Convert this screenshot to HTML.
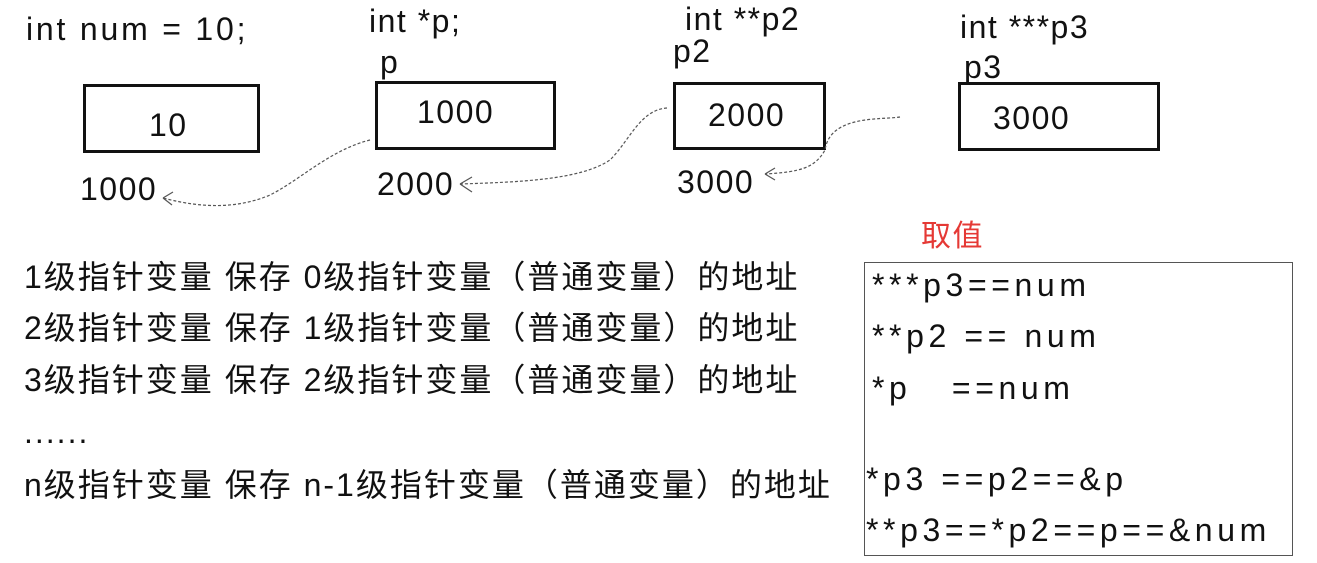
<!DOCTYPE html>
<html><head><meta charset="utf-8"><style>
body{margin:0;width:1317px;height:563px;background:#fff;position:relative;overflow:hidden;font-family:"Liberation Sans","Noto Sans CJK SC",sans-serif;color:#111}
.t{position:absolute;white-space:nowrap;font-size:32px;line-height:1;letter-spacing:1.5px}
.b{position:absolute;border:3px solid #111;box-sizing:border-box}
.c{font-size:32px;letter-spacing:2px}
.r{letter-spacing:4.6px}
</style></head><body>
<div class="t" style="left:26px;top:13px;letter-spacing:2.8px">int num = 10;</div>
<div class="t" style="left:369px;top:5px">int *p;</div>
<div class="t" style="left:380px;top:46px">p</div>
<div class="t" style="left:685px;top:3px">int **p2</div>
<div class="t" style="left:673px;top:35px">p2</div>
<div class="t" style="left:960px;top:11px">int ***p3</div>
<div class="t" style="left:964px;top:51px">p3</div>

<div class="b" style="left:83px;top:84px;width:177px;height:69px"></div>
<div class="t" style="left:149px;top:109px">10</div>
<div class="b" style="left:375px;top:81px;width:181px;height:69px"></div>
<div class="t" style="left:417px;top:96px">1000</div>
<div class="b" style="left:673px;top:82px;width:153px;height:68px"></div>
<div class="t" style="left:708px;top:99px">2000</div>
<div class="b" style="left:958px;top:82px;width:202px;height:69px"></div>
<div class="t" style="left:993px;top:102px">3000</div>

<div class="t" style="left:80px;top:173px">1000</div>
<div class="t" style="left:377px;top:168px">2000</div>
<div class="t" style="left:677px;top:166px">3000</div>

<svg style="position:absolute;left:0;top:0" width="1317" height="563" fill="none" stroke="#555" stroke-width="1.2" stroke-dasharray="3 2">
<path d="M370 140 C330 150 300 180 270 195 C230 212 190 205 163 198"/>
<path d="M163 198 l10 -6 M163 198 l9 7" stroke-dasharray="none"/>
<path d="M667 108 C640 110 630 140 610 160 C580 180 520 182 460 184"/>
<path d="M460 184 l12 -7 M460 184 l12 8" stroke-dasharray="none"/>
<path d="M900 117 C880 120 830 115 825 150 C815 168 800 172 765 174"/>
<path d="M765 174 l10 -6 M765 174 l10 6" stroke-dasharray="none"/>
</svg>

<div class="t c" style="left:24px;top:261px">1级指针变量 保存 0级指针变量（普通变量）的地址</div>
<div class="t c" style="left:24px;top:312px">2级指针变量 保存 1级指针变量（普通变量）的地址</div>
<div class="t c" style="left:24px;top:364px">3级指针变量 保存 2级指针变量（普通变量）的地址</div>
<div class="t c" style="left:24px;top:416px">......</div>
<div class="t c" style="left:24px;top:469px">n级指针变量 保存 n-1级指针变量（普通变量）的地址</div>

<div class="t" style="left:921px;top:222px;color:#e53935;font-size:30px">取值</div>
<div style="position:absolute;left:864px;top:262px;width:429px;height:294px;border:1px solid #555;box-sizing:border-box"></div>
<div class="t r" style="left:872px;top:269px">***p3==num</div>
<div class="t r" style="left:872px;top:320px">**p2 == num</div>
<div class="t r" style="left:872px;top:372px">*p &nbsp;&nbsp;==num</div>
<div class="t r" style="left:866px;top:463px">*p3 ==p2==&amp;p</div>
<div class="t r" style="left:866px;top:514px">**p3==*p2==p==&amp;num</div>
</body></html>
